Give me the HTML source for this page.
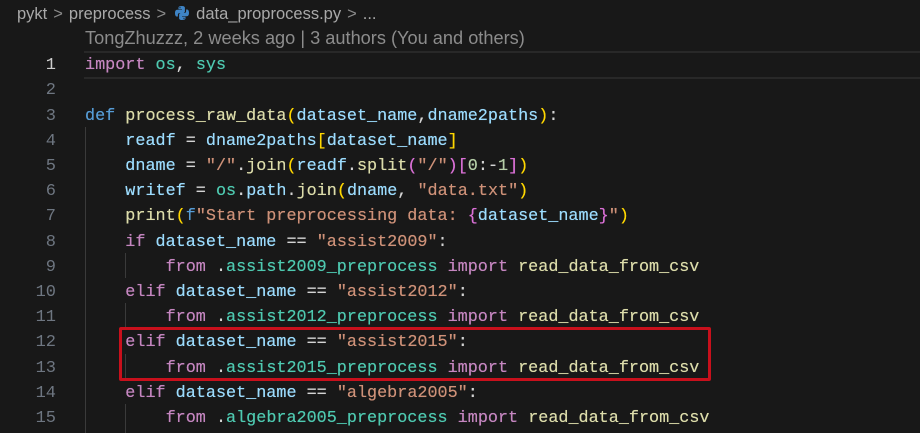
<!DOCTYPE html>
<html><head><meta charset="utf-8"><style>
html,body{margin:0;padding:0;background:#181818;width:920px;height:433px;overflow:hidden;position:relative}
.bc{position:absolute;top:2px;left:17px;font:16.5px "Liberation Sans",sans-serif;color:#a9a9a9;line-height:24px;white-space:pre}
.bc .sep{color:#8a8a8a;margin:0 6px}
.blame{position:absolute;top:26px;left:85px;font:18.2px "Liberation Sans",sans-serif;color:#8c8c8c;line-height:24px;white-space:pre}
.active{position:absolute;left:84px;right:0;top:51px;height:24px;border-top:2px solid #282828;border-bottom:2px solid #282828}
.ln{position:absolute;left:0;width:56px;text-align:right;font:17px "Liberation Mono",monospace;color:#6e7681;line-height:25px;margin-top:2px}
.cl{position:absolute;left:85px;font:16.8px "Liberation Mono",monospace;color:#d4d4d4;line-height:25px;white-space:pre;margin-top:2px;text-shadow:0 0 0.4px currentColor}
.g{position:absolute;width:1px;background:#3a3a3a}
.k{color:#c586c0}.d{color:#569cd6}.f{color:#dcdcaa}.v{color:#9cdcfe}.s{color:#ce9178}.m{color:#4ec9b0}.b1{color:#ffd700}.b2{color:#da70d6}.b3{color:#179fff}.n{color:#b5cea8}
.box{position:absolute;left:119px;top:327px;width:586px;height:48px;border:3.5px solid #c8101c;border-radius:2px}
</style></head><body>
<div class="bc">pykt<span class="sep">&gt;</span>preprocess<span class="sep">&gt;</span><svg width="16" height="16" viewBox="0 0 16 16" style="vertical-align:-2px;margin:0 6px 0 2px"><path d="M7.9 1C4.3 1 4.5 2.6 4.5 2.6V4.3h3.5v.5H3.1S1 4.6 1 8.1s1.8 3.4 1.8 3.4h1.1V9.9s-.1-1.9 1.9-1.9h3.3s1.8 0 1.8-1.8V2.9S11.2 1 7.9 1zM6 2.1a.6.6 0 110 1.2.6.6 0 010-1.2z" fill="#3e84c6"/><path d="M8.1 15c3.6 0 3.4-1.6 3.4-1.6v-1.7H8v-.5h4.9S15 11.4 15 7.9s-1.8-3.4-1.8-3.4h-1.1v1.6s.1 1.9-1.9 1.9H6.9s-1.8 0-1.8 1.8v3.3S4.8 15 8.1 15zm1.9-1.1a.6.6 0 110-1.2.6.6 0 010 1.2z" fill="#3e84c6"/></svg>data_proprocess.py<span class="sep">&gt;</span>...</div>
<div class="blame">TongZhuzzz, 2 weeks ago | 3 authors (You and others)</div>
<div class="active"></div>
<div class="g" style="left:85px;top:127px;height:306px"></div>
<div class="g" style="left:125px;top:253px;height:25px"></div>
<div class="g" style="left:125px;top:303px;height:25px"></div>
<div class="g" style="left:125px;top:354px;height:25px"></div>
<div class="g" style="left:125px;top:404px;height:29px"></div>

<div class="ln" style="top:51px;color:#cccccc">1</div>
<div class="ln" style="top:76px">2</div>
<div class="ln" style="top:102px">3</div>
<div class="ln" style="top:127px">4</div>
<div class="ln" style="top:152px">5</div>
<div class="ln" style="top:177px">6</div>
<div class="ln" style="top:202px">7</div>
<div class="ln" style="top:228px">8</div>
<div class="ln" style="top:253px">9</div>
<div class="ln" style="top:278px">10</div>
<div class="ln" style="top:303px">11</div>
<div class="ln" style="top:328px">12</div>
<div class="ln" style="top:354px">13</div>
<div class="ln" style="top:379px">14</div>
<div class="ln" style="top:404px">15</div>

<div class="cl" style="top:51px"><span class="k">import</span> <span class="m">os</span>, <span class="m">sys</span></div>
<div class="cl" style="top:102px"><span class="d">def</span> <span class="f">process_raw_data</span><span class="b1">(</span><span class="v">dataset_name</span>,<span class="v">dname2paths</span><span class="b1">)</span>:</div>
<div class="cl" style="top:127px">    <span class="v">readf</span> = <span class="v">dname2paths</span><span class="b1">[</span><span class="v">dataset_name</span><span class="b1">]</span></div>
<div class="cl" style="top:152px">    <span class="v">dname</span> = <span class="s">"/"</span>.<span class="f">join</span><span class="b1">(</span><span class="v">readf</span>.<span class="f">split</span><span class="b2">(</span><span class="s">"/"</span><span class="b2">)[</span><span class="n">0</span>:-<span class="n">1</span><span class="b2">]</span><span class="b1">)</span></div>
<div class="cl" style="top:177px">    <span class="v">writef</span> = <span class="m">os</span>.<span class="v">path</span>.<span class="f">join</span><span class="b1">(</span><span class="v">dname</span>, <span class="s">"data.txt"</span><span class="b1">)</span></div>
<div class="cl" style="top:202px">    <span class="f">print</span><span class="b1">(</span><span class="d">f</span><span class="s">"Start preprocessing data: </span><span class="b2">{</span><span class="v">dataset_name</span><span class="b2">}</span><span class="s">"</span><span class="b1">)</span></div>
<div class="cl" style="top:228px">    <span class="k">if</span> <span class="v">dataset_name</span> == <span class="s">"assist2009"</span>:</div>
<div class="cl" style="top:253px">        <span class="k">from</span> .<span class="m">assist2009_preprocess</span> <span class="k">import</span> <span class="f">read_data_from_csv</span></div>
<div class="cl" style="top:278px">    <span class="k">elif</span> <span class="v">dataset_name</span> == <span class="s">"assist2012"</span>:</div>
<div class="cl" style="top:303px">        <span class="k">from</span> .<span class="m">assist2012_preprocess</span> <span class="k">import</span> <span class="f">read_data_from_csv</span></div>
<div class="cl" style="top:328px">    <span class="k">elif</span> <span class="v">dataset_name</span> == <span class="s">"assist2015"</span>:</div>
<div class="cl" style="top:354px">        <span class="k">from</span> .<span class="m">assist2015_preprocess</span> <span class="k">import</span> <span class="f">read_data_from_csv</span></div>
<div class="cl" style="top:379px">    <span class="k">elif</span> <span class="v">dataset_name</span> == <span class="s">"algebra2005"</span>:</div>
<div class="cl" style="top:404px">        <span class="k">from</span> .<span class="m">algebra2005_preprocess</span> <span class="k">import</span> <span class="f">read_data_from_csv</span></div>
<div class="box"></div>
</body></html>
